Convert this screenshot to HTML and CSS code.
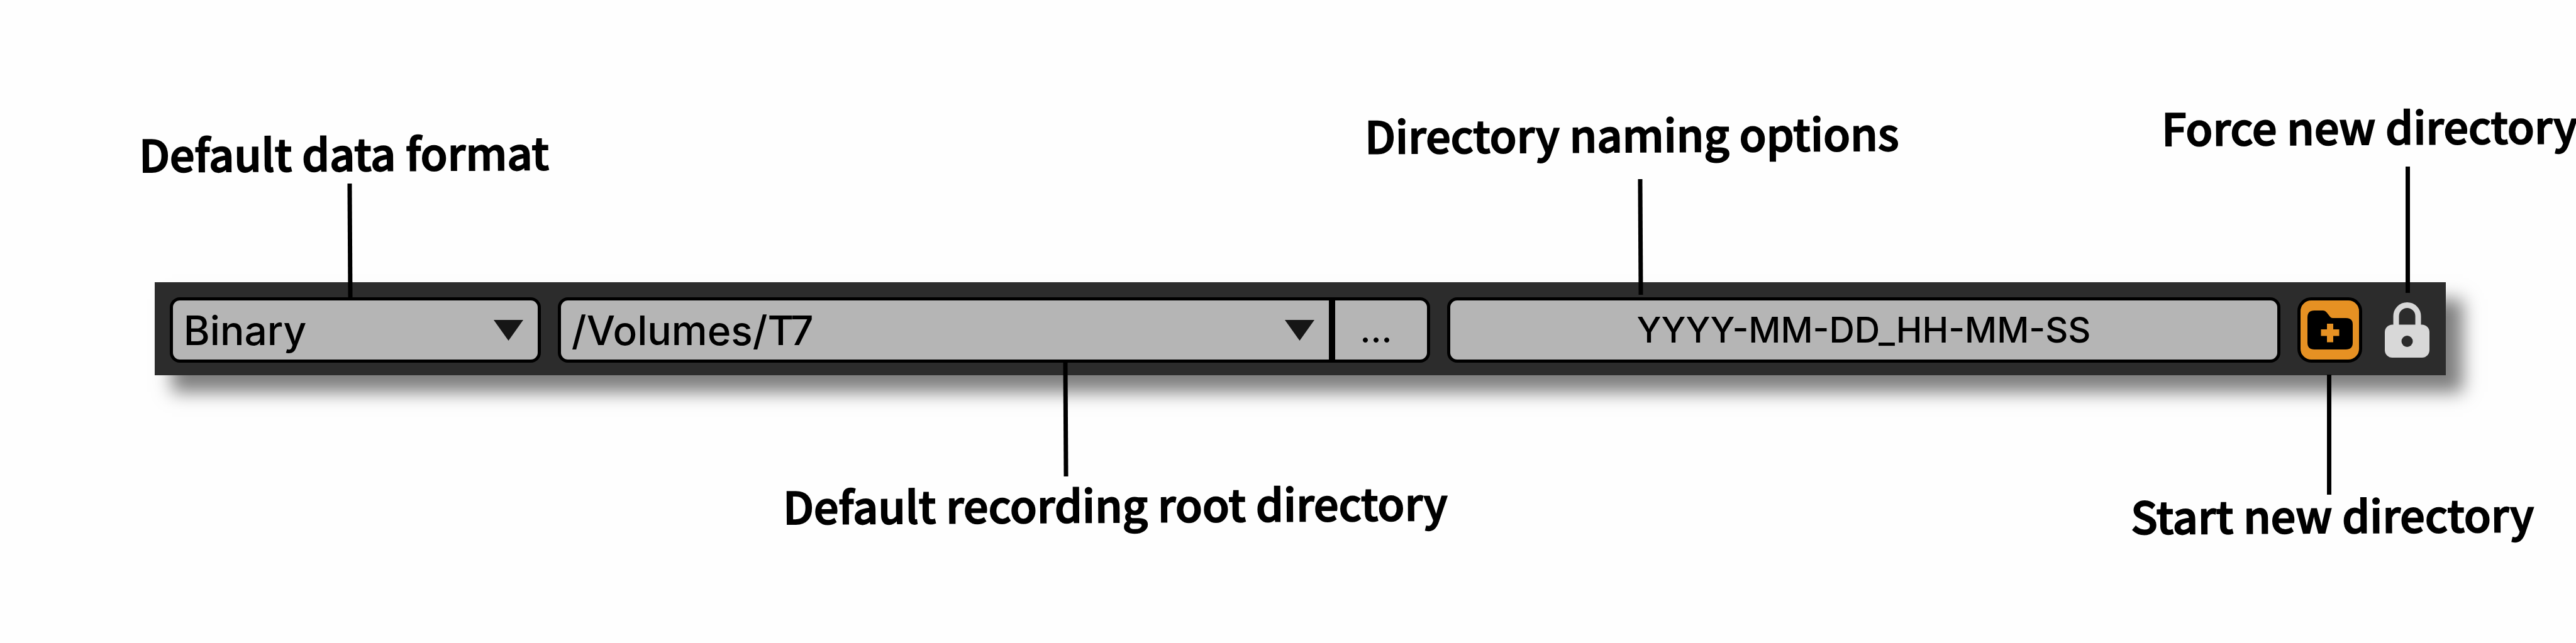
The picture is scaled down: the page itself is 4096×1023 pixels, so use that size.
FILE: index.html
```html
<!DOCTYPE html>
<html lang="en">
<head>
<meta charset="utf-8">
<meta name="viewport" content="width=device-width, initial-scale=1">
<title>Recording options</title>
<link rel="stylesheet" href="styles.css">
</head>
<body>
<main class="figure">
  <div class="callouts callouts-top">
    <div class="callout callout-format">
      <label class="callout-label" for="format">Default data format</label>
      <span class="leader leader-tilted"></span>
    </div>
    <div class="callout callout-naming">
      <span class="callout-label">Directory naming options</span>
      <span class="leader leader-tilted"></span>
    </div>
    <div class="callout callout-force">
      <span class="callout-label">Force new directory</span>
      <span class="leader"></span>
    </div>
  </div>

  <div class="toolbar">
    <div class="dropdown">
      <select class="control select" id="format">
        <option>Binary</option>
      </select>
      <svg class="arrow" viewBox="0 0 47 33" aria-hidden="true"><path d="M0 0H47L23.500 33Z"/></svg>
    </div>
    <div class="path-group">
      <div class="dropdown">
        <select class="control select select-joined" id="root">
          <option>/Volumes/T7</option>
        </select>
        <svg class="arrow" viewBox="0 0 47 33" aria-hidden="true"><path d="M0 0H47L23.500 33Z"/></svg>
      </div>
      <button class="control browse" type="button">...</button>
    </div>
    <button class="control naming" type="button">YYYY-MM-DD_HH-MM-SS</button>
    <button class="control new-directory" type="button" aria-label="Start new directory">
      <svg class="folder-icon" viewBox="0 0 72 62" aria-hidden="true">
        <path fill="#000" d="M11 0H25Q28 0 30.500 3L36 10Q37.500 12 40 12H61Q72 12 72 22V51Q72 62 61 62H11Q0 62 0 51V11Q0 0 11 0Z"/>
        <path fill="#e69123" d="M31 21H41V30H50.500V40.500H41V50.500H31V40.500H21.500V30H31Z"/>
      </svg>
    </button>
    <button class="lock" type="button" aria-label="Force new directory">
      <svg class="lock-icon" viewBox="0 0 71 88" aria-hidden="true">
        <path fill="none" stroke="#d8d8d8" stroke-width="9" d="M18 40V22a17.500 17.500 0 0 1 35 0V40"/>
        <rect x="0" y="35.500" width="71" height="52.500" rx="12" fill="#d8d8d8"/>
        <circle cx="35.500" cy="62" r="9" fill="#2c2c2c"/>
      </svg>
    </button>
  </div>

  <div class="callouts callouts-bottom">
    <div class="callout callout-root">
      <span class="leader leader-tilted"></span>
      <label class="callout-label" for="root">Default recording root directory</label>
    </div>
    <div class="callout callout-start">
      <span class="leader"></span>
      <span class="callout-label">Start new directory</span>
    </div>
  </div>
</main>
</body>
</html>
```
FILE: styles.css
```css
* {
  box-sizing: border-box;
}

body {
  margin: 0;
  background: #fefefe;
  color: #000;
  overflow-x: hidden;
}

.figure {
  min-height: 100vh;
  overflow: hidden;
}

/* Callouts above and below the toolbar */
.callouts {
  display: grid;
  position: relative;
}

.callouts-top {
  z-index: 1;
  grid-template-columns: minmax(0, 1949fr) minmax(0, 1267fr) minmax(0, 659fr);
  align-items: end;
  padding: 170px 0 0 5.4%;
}

.callouts-bottom {
  grid-template-columns: minmax(0, 2144fr) minmax(0, 708fr);
  align-items: start;
  padding-left: 30.4%;
}

.callout {
  display: flex;
  flex-direction: column;
  align-items: flex-start;
}

.callout-label {
  font: 500 70px/60px "Noto Sans CJK SC", "Noto Sans", sans-serif;
  -webkit-text-stroke: 2px #000;
  white-space: nowrap;
  transform: rotate(-0.33deg);
}

.leader {
  width: 7px;
  background: #000;
}

.leader-tilted {
  transform: rotate(-0.33deg);
}

.callout-format {
  gap: 20px;
  margin-bottom: -27px;
}

.callout-format .leader {
  height: 184px;
  margin-left: 332px;
}

.callout-naming {
  gap: 43px;
  margin-bottom: -20px;
}

.callout-naming .leader {
  height: 184px;
  margin-left: 435px;
}

.callout-force {
  gap: 35px;
  margin-bottom: -17px;
}

.callout-force .leader {
  height: 201px;
  margin-left: 388px;
}

.callout-root {
  gap: 13px;
  margin-top: -20px;
}

.callout-root .leader {
  height: 181px;
  margin-left: 446px;
}

.callout-start {
  gap: 1px;
  margin-top: -1px;
}

.callout-start .leader {
  height: 191px;
  margin-left: 312px;
}

/* Toolbar */
.toolbar {
  display: grid;
  grid-template-columns: minmax(0, 590fr) minmax(0, 1387fr) minmax(0, 1325fr) 103px 80px;
  align-items: center;
  gap: 27px;
  margin: 0 5.05% 0 6%;
  padding: 24px 26px 20px 24px;
  background: #2c2c2c;
  box-shadow: 27px 27px 27px rgba(0, 0, 0, 0.5);
}

.control {
  height: 104px;
  margin: 0;
  padding: 0;
  border: 5px solid #000;
  border-radius: 16px;
  background: #b5b5b5;
  color: #000;
  font-family: Inter, "Liberation Sans", sans-serif;
  font-weight: 500;
}

.dropdown {
  display: grid;
  flex: 1;
  min-width: 0;
  align-items: center;
}

.dropdown > * {
  grid-area: 1 / 1;
}

.select {
  width: 100%;
  padding-left: 17px;
  appearance: none;
  font-size: 64px;
}

.select-joined {
  border-radius: 16px 0 0 16px;
}

.arrow {
  justify-self: end;
  width: 47px;
  height: 33px;
  margin-right: 28px;
  fill: #161616;
  pointer-events: none;
}

.path-group {
  display: flex;
}

.browse {
  width: 156px;
  padding-right: 16px;
  border-radius: 0 16px 16px 0;
  font-size: 56px;
}

.naming {
  font-size: 56px;
}

.new-directory {
  display: grid;
  place-items: center;
  border-radius: 22px;
  background: #e69123;
}

.folder-icon {
  width: 72px;
  height: 62px;
}

.lock {
  justify-self: end;
  display: grid;
  margin: 0;
  padding: 0;
  border: 0;
  background: none;
}

.lock-icon {
  width: 71px;
  height: 88px;
}
```
